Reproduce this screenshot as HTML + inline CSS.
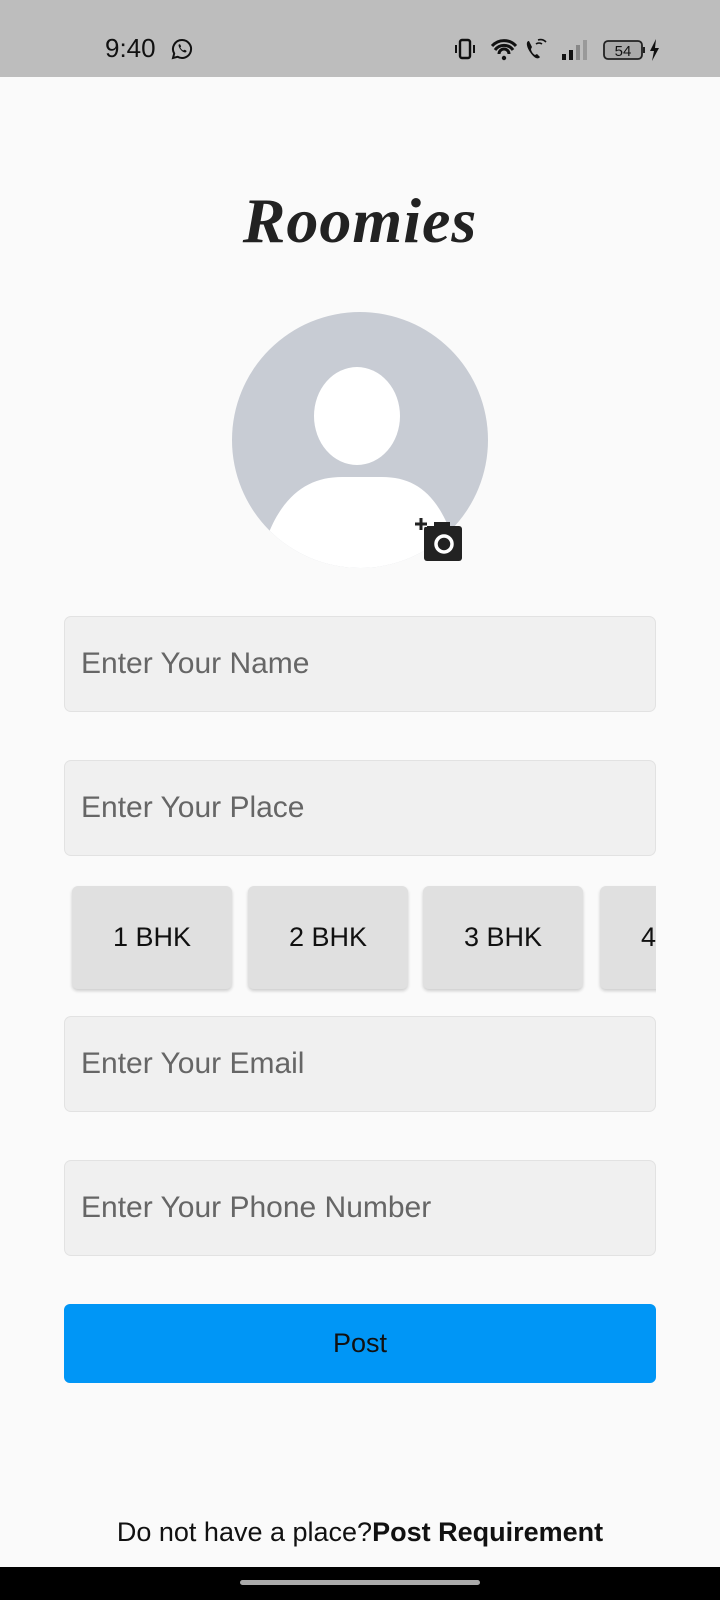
<!DOCTYPE html>
<html><head><meta charset="utf-8"><style>
*{margin:0;padding:0;box-sizing:border-box}
body{width:720px;height:1600px;background:#fafafa;font-family:"Liberation Sans",sans-serif;position:relative;overflow:hidden}
.sb{position:absolute;left:0;top:0;width:720px;height:77px;background:#bdbdbd}
.abs{position:absolute}
.field{position:absolute;left:64px;width:592px;height:96px;background:#f0f0f0;border:1px solid #e2e2e2;border-radius:7px;font-size:30px;color:#666;padding-left:16px;line-height:94px}
.btn{position:absolute;top:886px;height:103px;width:160px;background:#e0e0e0;border-radius:6px;box-shadow:0 2px 3px rgba(0,0,0,.18);font-size:27px;color:#111;text-align:center;line-height:103px}
</style></head><body>
<div class="sb">
<div class="abs" style="left:105px;top:33px;font-size:26px;color:#111">9:40</div>
<svg class="abs" style="left:170px;top:37px" width="24" height="24" viewBox="0 0 24 24"><path d="M12 3a9 9 0 0 0-7.8 13.5L3 21l4.6-1.2A9 9 0 1 0 12 3z" fill="none" stroke="#111" stroke-width="2"/><path d="M8.5 8c.5-1 1.5-1 2 0l.6 1.5-.8 1c.6 1.3 1.7 2.4 3 3l1-.8 1.5.6c1 .5 1 1.5 0 2-2 1-7-3-7.3-7.3z" fill="#111"/></svg>
<svg class="abs" style="left:455px;top:38px" width="215" height="24" viewBox="0 0 215 24"><rect x="5" y="2" width="10" height="18" rx="2" fill="none" stroke="#111" stroke-width="2.4"/><path d="M1 7v8M19 7v8" stroke="#111" stroke-width="2"/><path d="M37 8a16 16 0 0 1 24 0M40 12a11 11 0 0 1 18 0M44 16a5 5 0 0 1 10 0" fill="none" stroke="#111" stroke-width="3"/><circle cx="49" cy="20" r="2.2" fill="#111"/><path d="M74 3c-3 0-3 5 1 11s8 8 10 5l-3-3-2 1c-2-1-4-4-4-6l1-2z" fill="#111"/><path d="M81 6a5 5 0 0 1 6 0M83 2a8 8 0 0 1 8 2" stroke="#111" stroke-width="1.6" fill="none"/><rect x="107" y="16" width="4" height="6" fill="#111"/><rect x="114" y="12" width="4" height="10" fill="#111"/><rect x="121" y="7" width="4" height="15" fill="#888"/><rect x="128" y="2" width="4" height="20" fill="#999"/><rect x="149" y="3" width="38" height="18" rx="4" fill="#aaa" stroke="#222" stroke-width="1.8"/><rect x="188" y="9" width="2" height="6" fill="#222"/><text x="168" y="18" font-size="15" text-anchor="middle" fill="#111" font-family="Liberation Sans">54</text><path d="M201 1l-6 12h4l-2 10 7-13h-4z" fill="#111"/></svg>
</div>
<div class="abs" style="left:0;width:720px;top:184px;text-align:center;font-family:'Liberation Serif',serif;font-style:italic;font-weight:bold;font-size:64px;color:#222;letter-spacing:1px">Roomies</div>
<svg class="abs" style="left:232px;top:312px" width="256" height="256" viewBox="0 0 256 256">
<defs><clipPath id="c"><circle cx="128" cy="128" r="128"/></clipPath></defs>
<circle cx="128" cy="128" r="128" fill="#c8ccd4"/>
<g clip-path="url(#c)"><ellipse cx="125" cy="104" rx="43" ry="49" fill="#fff"/><path d="M25 260 C40 190 70 165 110 165 L150 165 C190 165 215 190 230 260Z" fill="#fff"/></g>
</svg>
<svg class="abs" style="left:414px;top:518px" width="50" height="45" viewBox="0 0 50 45"><rect x="10" y="8" width="38" height="35" rx="3" fill="#222"/><rect x="20" y="4" width="16" height="8" fill="#222"/><circle cx="30" cy="26" r="8" fill="none" stroke="#fff" stroke-width="3.5"/><path d="M1 6h12M7 0v12" stroke="#fafafa" stroke-width="6"/><path d="M1 6h12M7 0v12" stroke="#222" stroke-width="3"/></svg>
<div class="field" style="top:616px">Enter Your Name</div>
<div class="field" style="top:760px">Enter Your Place</div>
<div class="abs" style="left:64px;top:870px;width:592px;height:130px;overflow:hidden">
<div class="btn" style="left:8px;top:16px">1 BHK</div>
<div class="btn" style="left:184px;top:16px">2 BHK</div>
<div class="btn" style="left:359px;top:16px">3 BHK</div>
<div class="btn" style="left:536px;top:16px">4 BHK</div>
</div>
<div class="field" style="top:1016px">Enter Your Email</div>
<div class="field" style="top:1160px">Enter Your Phone Number</div>
<div class="abs" style="left:64px;top:1304px;width:592px;height:79px;background:#0096f6;border-radius:6px;text-align:center;line-height:79px;font-size:27px;color:#111">Post</div>
<div class="abs" style="left:0;width:720px;top:1517px;text-align:center;font-size:27px;color:#111">Do not have a place?<b>Post Requirement</b></div>
<div class="abs" style="left:0;top:1567px;width:720px;height:33px;background:#000"></div>
<div class="abs" style="left:240px;top:1580px;width:240px;height:5px;border-radius:3px;background:#aaa"></div>
</body></html>
